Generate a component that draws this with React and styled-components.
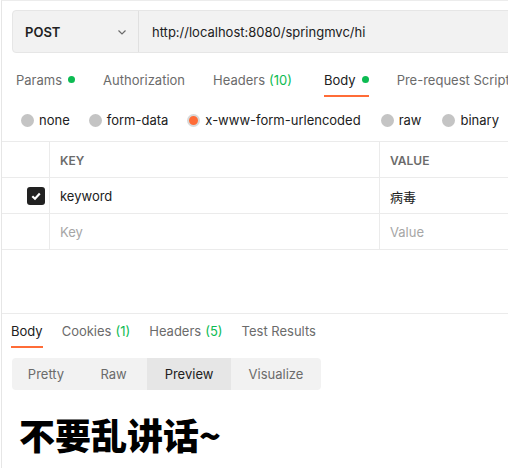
import React from "react";
import styled, { createGlobalStyle } from "styled-components";

const GlobalStyle = createGlobalStyle`
  html, body {
    margin: 0;
    padding: 0;
    background: #ffffff;
  }
  body {
    font-family: Inter, "Noto Sans CJK SC", sans-serif;
    color: #212121;
  }
`;

const Pane = styled.div`
  width: 508px;
  height: 468px;
  box-sizing: border-box;
  border-left: 1px solid #e6e6e6;
  border-top: 1px solid #ececec;
  margin-left: 1px;
  overflow: hidden;
  display: flex;
  flex-direction: column;
`;

const UrlBar = styled.div`
  display: flex;
  height: 43px;
  margin: 9px -20px 0 10px;
  background: #f2f2f2;
  border: 1px solid #e6e6e6;
  border-radius: 4px;
  box-sizing: border-box;
`;

const Method = styled.div`
  width: 126px;
  display: flex;
  align-items: center;
  justify-content: space-between;
  padding: 0 10px 0 12px;
  box-sizing: border-box;
  border-right: 1px solid #e0e0e0;
  font-size: 13px;
  font-weight: 600;
  color: #212121;
`;

const UrlText = styled.div`
  display: flex;
  align-items: center;
  padding-left: 13px;
  font-size: 13px;
  color: #212121;
`;

const Tabs = styled.div`
  display: flex;
  gap: ${({ gap }) => gap}px;
  padding-left: ${({ left }) => left}px;
  margin-top: ${({ top }) => top}px;
  white-space: nowrap;
`;

const Tab = styled.div`
  font-size: 13px;
  color: ${({ active }) => (active ? "#212121" : "#6b6b6b")};
  padding-bottom: 7px;
  margin-left: ${({ shift }) => shift || 0}px;
  border-bottom: 2px solid ${({ active }) => (active ? "#ff6c37" : "transparent")};
  display: flex;
  align-items: center;
`;

const Count = styled.span`
  color: #0cbb52;
  margin-left: 4px;
`;

const Dot = styled.span`
  width: 7px;
  height: 7px;
  border-radius: 50%;
  background: #0cbb52;
  margin-left: 6px;
  margin-top: -2px;
`;

const RadioRow = styled.div`
  display: flex;
  align-items: center;
  padding-left: 19px;
  margin-top: 13px;
  height: 20px;
  white-space: nowrap;
`;

const RadioItem = styled.label`
  display: flex;
  align-items: center;
  font-size: 13px;
  color: #212121;
  margin-right: ${({ mr }) => mr}px;
`;

const Radio = styled.span`
  width: 13px;
  height: 13px;
  border-radius: 50%;
  background: #c4c4c4;
  margin-right: 5px;
  box-sizing: border-box;
  ${({ checked }) =>
    checked &&
    `
    background: #ff6c37;
    border: 2px solid #d9d9d9;
  `}
`;

const Table = styled.div`
  margin-top: 11px;
  border-top: 1px solid #ebebeb;
  display: grid;
  grid-template-columns: 48px 330px 1fr;
`;

const Cell = styled.div`
  height: 36px;
  box-sizing: border-box;
  border-bottom: 1px solid #ebebeb;
  border-right: ${({ last }) => (last ? "none" : "1px solid #ebebeb")};
  display: flex;
  align-items: center;
  justify-content: ${({ center }) => (center ? "flex-end" : "flex-start")};
  padding: ${({ center }) => (center ? "0 4px 0 0" : "1px 0 0 10px")};
  font-size: ${({ head }) => (head ? "12px" : "13px")};
  font-weight: ${({ head }) => (head ? 600 : 400)};
  color: ${({ head, muted }) => (head ? "#6b6b6b" : muted ? "#a6a6a6" : "#212121")};
`;

const Check = styled.span`
  width: 18px;
  height: 18px;
  border-radius: 3px;
  background: #212121;
  display: flex;
  align-items: center;
  justify-content: center;
`;

const Spacer = styled.div`
  height: 63px;
  border-bottom: 1px solid #ebebeb;
`;

const Segmented = styled.div`
  display: flex;
  width: 309px;
  height: 32px;
  margin: 10px 0 0 10px;
  background: #f2f2f2;
  border-radius: 4px;
  overflow: hidden;
`;

const Segment = styled.div`
  width: ${({ w }) => w}px;
  display: flex;
  align-items: center;
  justify-content: center;
  font-size: 13px;
  color: ${({ active }) => (active ? "#212121" : "#6b6b6b")};
  background: ${({ active }) => (active ? "#e6e6e6" : "transparent")};
`;

const Preview = styled.h1`
  margin: 22px 0 0 17px;
  font-family: "Noto Sans CJK SC", sans-serif;
  font-size: 36px;
  font-weight: 900;
  line-height: 44px;
  color: #000;
`;

export default function App() {
  return (
    <>
      <GlobalStyle />
      <Pane>
        <UrlBar>
          <Method>
            POST
            <svg width="12" height="12" viewBox="0 0 12 12">
              <path d="M2.5 4.5 L6 8 L9.5 4.5" fill="none" stroke="#6b6b6b" strokeWidth="1.2" />
            </svg>
          </Method>
          <UrlText>http://localhost:8080/springmvc/hi</UrlText>
        </UrlBar>

        <Tabs gap={28} left={14} top={19}>
          <Tab>Params<Dot /></Tab>
          <Tab>Authorization</Tab>
          <Tab>Headers<Count>(10)</Count></Tab>
          <Tab active shift={4}>Body<Dot /></Tab>
          <Tab>Pre-request Script</Tab>
        </Tabs>

        <RadioRow>
          <RadioItem mr={19}><Radio />none</RadioItem>
          <RadioItem mr={19}><Radio />form-data</RadioItem>
          <RadioItem mr={20}><Radio checked />x-www-form-urlencoded</RadioItem>
          <RadioItem mr={21}><Radio />raw</RadioItem>
          <RadioItem mr={19}><Radio />binary</RadioItem>
        </RadioRow>

        <Table>
          <Cell />
          <Cell head>KEY</Cell>
          <Cell head last>VALUE</Cell>

          <Cell center>
            <Check>
              <svg width="12" height="12" viewBox="0 0 12 12">
                <path d="M2.3 6.2 L5 8.8 L9.8 3.6" fill="none" stroke="#fff" strokeWidth="2.2" />
              </svg>
            </Check>
          </Cell>
          <Cell>keyword</Cell>
          <Cell last>病毒</Cell>

          <Cell />
          <Cell muted>Key</Cell>
          <Cell muted last>Value</Cell>
        </Table>

        <Spacer />

        <Tabs gap={19} left={9} top={9}>
          <Tab active>Body</Tab>
          <Tab>Cookies<Count>(1)</Count></Tab>
          <Tab>Headers<Count>(5)</Count></Tab>
          <Tab>Test Results</Tab>
        </Tabs>

        <Segmented>
          <Segment w={68}>Pretty</Segment>
          <Segment w={67}>Raw</Segment>
          <Segment w={84} active>Preview</Segment>
          <Segment w={90}>Visualize</Segment>
        </Segmented>

        <Preview>不要乱讲话~</Preview>
      </Pane>
    </>
  );
}
